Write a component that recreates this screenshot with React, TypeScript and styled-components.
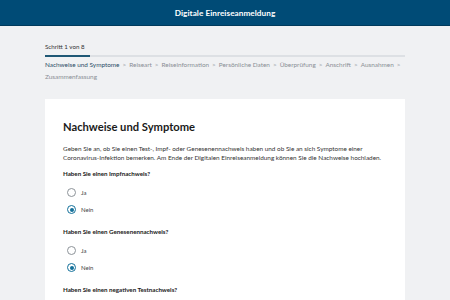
import React from "react";
import styled, { createGlobalStyle } from "styled-components";

const Global = createGlobalStyle`
  html, body { margin: 0; padding: 0; }
  body {
    background: #f0f1f3;
    font-family: Lato, "Noto Sans", sans-serif;
    color: #1a1a1a;
    -webkit-font-smoothing: antialiased;
  }
`;

const Header = styled.header`
  height: 25px;
  background: #004b76;
  border-bottom: 1px solid #003a5c;
  display: flex;
  align-items: center;
  justify-content: center;
  color: #ffffff;
  font-weight: 700;
  font-size: 8.2px;
  letter-spacing: 0.05px;
`;

const Main = styled.main`
  padding: 0 45px;
`;

const StepLabel = styled.div`
  padding-top: 17px;
  font-size: 6.2px;
  color: #333;
  line-height: 8px;
`;

const Progress = styled.div`
  margin-top: 4px;
  height: 2px;
  background: #dde0e4;
`;

const ProgressFill = styled.div`
  height: 2px;
  background: #1f5875;
`;

const Crumbs = styled.nav`
  margin-top: 2px;
  display: flex;
  flex-wrap: wrap;
  column-gap: 3px;
  font-size: 6.4px;
  line-height: 12px;
`;

const CrumbItem = styled.span`
  display: inline-flex;
  gap: 3px;
  white-space: nowrap;
`;

const Crumb = styled.span<{ $active?: boolean }>`
  color: ${(p) => (p.$active ? "#2b4c66" : "#8a8f95")};
`;

const Sep = styled.span`
  color: #9aa0a6;
`;

const Card = styled.section`
  margin-top: 16px;
  background: #ffffff;
  padding: 21px 18px 20px;
  min-height: 220px;
`;

const Title = styled.h1`
  margin: 0;
  font-size: 11.2px;
  font-weight: 700;
  color: #1a1a1a;
  line-height: 14px;
`;

const Lead = styled.p`
  margin: 10px 0 0;
  font-size: 6.4px;
  line-height: 9px;
  color: #333;
`;

const Question = styled.div`
  margin-top: 7px;
  font-size: 6.2px;
  font-weight: 700;
  color: #1a1a1a;
  line-height: 9px;
`;

const Options = styled.div`
  display: flex;
  flex-direction: column;
  gap: 8px;
  padding: 10px 0 6px 4px;
`;

const Option = styled.label`
  display: flex;
  align-items: center;
  gap: 5px;
  font-size: 6px;
  color: #444;
  height: 9px;
`;

const Radio = styled.span<{ $checked?: boolean }>`
  box-sizing: border-box;
  width: 9px;
  height: 9px;
  border-radius: 50%;
  border: 1px solid ${(p) => (p.$checked ? "#13709a" : "#8d9399")};
  display: flex;
  align-items: center;
  justify-content: center;
  &::after {
    content: "";
    width: 4px;
    height: 4px;
    border-radius: 50%;
    background: ${(p) => (p.$checked ? "#13709a" : "transparent")};
  }
`;

const crumbs = [
  "Nachweise und Symptome",
  "Reiseart",
  "Reiseinformation",
  "Persönliche Daten",
  "Überprüfung",
  "Anschrift",
  "Ausnahmen",
  "Zusammenfassung",
];

const questions = [
  "Haben Sie einen Impfnachweis?",
  "Haben Sie einen Genesenennachweis?",
  "Haben Sie einen negativen Testnachweis?",
];

export default function App() {
  return (
    <>
      <Global />
      <Header>Digitale Einreiseanmeldung</Header>
      <Main>
        <StepLabel>Schritt 1 von 8</StepLabel>
        <Progress>
          <ProgressFill style={{ width: `${(1 / 8) * 100}%` }} />
        </Progress>
        <Crumbs>
          {crumbs.map((c, i) => (
            <CrumbItem key={c}>
              <Crumb $active={i === 0}>{c}</Crumb>
              {i < crumbs.length - 1 && <Sep>&gt;</Sep>}
            </CrumbItem>
          ))}
        </Crumbs>
        <Card>
          <Title>Nachweise und Symptome</Title>
          <Lead>
            Geben Sie an, ob Sie einen Test-, Impf- oder Genesenennachweis haben und ob Sie an sich Symptome einer
            <br />
            Coronavirus-Infektion bemerken. Am Ende der Digitalen Einreiseanmeldung können Sie die Nachweise hochladen.
          </Lead>
          {questions.map((q, i) => (
            <React.Fragment key={q}>
              <Question>{q}</Question>
              {i < 2 && (
                <Options>
                  <Option>
                    <Radio />
                    Ja
                  </Option>
                  <Option>
                    <Radio $checked />
                    Nein
                  </Option>
                </Options>
              )}
            </React.Fragment>
          ))}
        </Card>
      </Main>
    </>
  );
}
